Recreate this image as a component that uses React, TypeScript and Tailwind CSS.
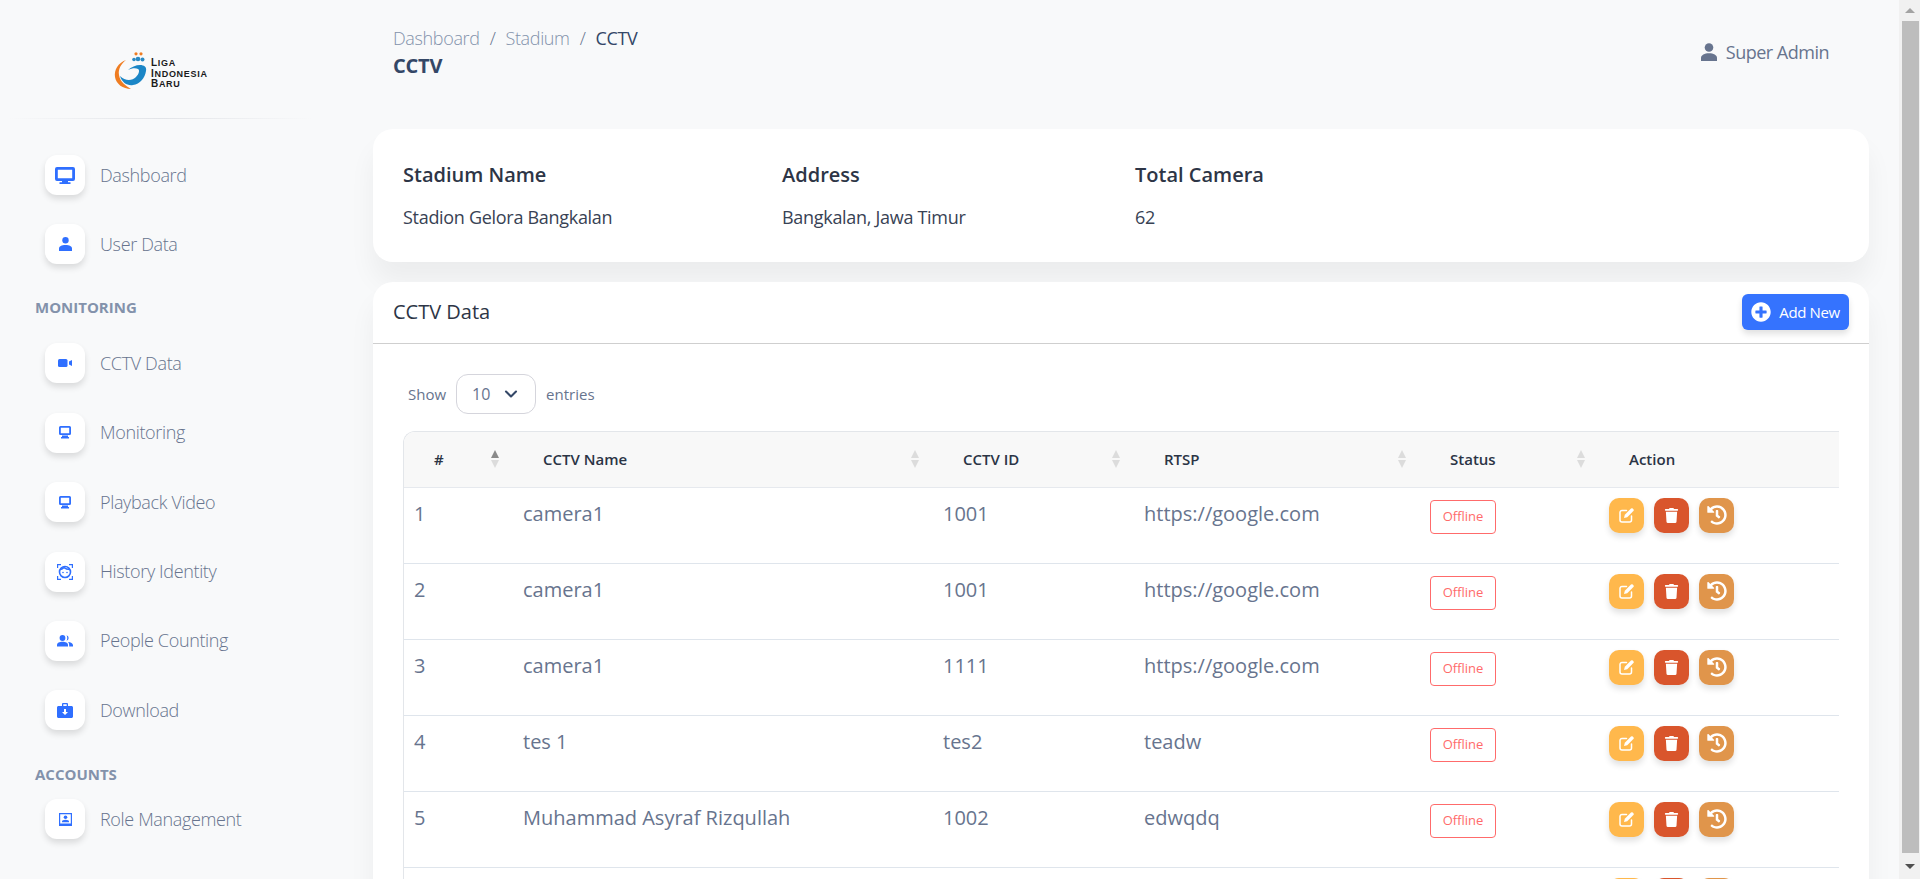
import type { ReactNode } from 'react';
import { ChevronDown } from 'lucide-react';
import { FaHistory, FaPlusCircle, FaTrash } from 'react-icons/fa';

const MonitorIcon = () => (
  <svg width="20" height="17" viewBox="0 0 20 17" fill="#2f6fff">
    <path fillRule="evenodd" d="M2 0h16a2 2 0 0 1 2 2v10a2 2 0 0 1-2 2h-5v1.200h2.500V17H4.500v-1.800H7V14H2a2 2 0 0 1-2-2V2a2 2 0 0 1 2-2Zm.8 2.800v8.400h14.400V2.800H2.800Z" />
  </svg>
);

const SmallMonitor = () => (
  <svg width="12" height="13" viewBox="0 0 12 13" fill="#2f6fff">
    <path fillRule="evenodd" d="M1.500 0h9A1.500 1.500 0 0 1 12 1.500v6A1.500 1.500 0 0 1 10.500 9h-9A1.500 1.500 0 0 1 0 7.500v-6A1.500 1.500 0 0 1 1.500 0Zm.3 1.800v5.400h8.400V1.800H1.800Z" />
    <path d="M3 9.500h6V11h1v1.500H2V11h1Z" />
  </svg>
);

const EditIcon = () => (
  <svg width="15" height="15" viewBox="0 0 15 15" fill="none">
    <path d="M7.500 2.500H3A2 2 0 0 0 1 4.500V12a2 2 0 0 0 2 2h7.500a2 2 0 0 0 2-2V8" stroke="white" strokeWidth="1.500" strokeLinecap="round" />
    <path d="M12 .6a1.300 1.300 0 0 1 1.800 0l.6.6a1.300 1.300 0 0 1 0 1.800L8.200 9.200 5 10l.8-3.200L12 .6Z" fill="white" />
  </svg>
);

const AdminIcon = () => (
  <svg width="16" height="18" viewBox="0 0 16 18" fill="#67748e">
    <circle cx="8" cy="4.500" r="4.300" />
    <path d="M0 18v-3.200C0 12 3.500 10.200 8 10.200s8 1.800 8 4.600V18Z" />
  </svg>
);

const icons: Record<string, ReactNode> = {
  dashboard: <MonitorIcon />,
  user: (
    <svg width="13" height="14" viewBox="0 0 13 14" fill="#2f6fff">
      <circle cx="6.500" cy="3.300" r="3.200" />
      <path d="M0 14v-2.500C0 9.300 2.500 8 6.500 8s6.500 1.300 6.500 3.500V14Z" />
    </svg>
  ),
  cctv: (
    <svg width="14" height="8" viewBox="0 0 14 8" fill="#2f6fff">
      <rect width="9.500" height="8" rx="1.500" />
      <path d="M11 2.500 14 1v6l-3-1.500Z" />
    </svg>
  ),
  monitor: <SmallMonitor />,
  face: (
    <svg width="16" height="16" viewBox="0 0 16 16" fill="none" stroke="#2f6fff" strokeWidth="1.200">
      <path d="M.6 4V.6H4M12 .6h3.400V4M.6 12v3.400H4M12 15.400h3.400V12" />
      <circle cx="8" cy="8" r="5.500" strokeWidth="1.600" />
      <circle cx="6" cy="8.500" r=".8" fill="#2f6fff" stroke="none" />
      <circle cx="10" cy="8.500" r=".8" fill="#2f6fff" stroke="none" />
      <path d="M3 5.500C5 5.500 6 4.500 7 3.500c1.500 1.500 3 2 6 2" strokeWidth="1.400" />
    </svg>
  ),
  people: (
    <svg width="16" height="12" viewBox="0 0 16 12" fill="#2f6fff">
      <circle cx="5.500" cy="3" r="2.900" />
      <path d="M0 11.500V10c0-2 2.500-3.200 5.500-3.200S11 8 11 10v1.500Z" />
      <path d="M9.500.2a2.900 2.900 0 0 1 0 5.600C10.500 4.500 10.500 1.500 9.500.2ZM11 7c2.800.3 5 1.400 5 3.200v1.300h-3.800V10c0-1.200-.4-2.200-1.200-3Z" />
    </svg>
  ),
  download: (
    <svg width="16" height="15" viewBox="0 0 16 15" fill="#2f6fff">
      <path fillRule="evenodd" d="M5 3V1.200C5 .5 5.500 0 6.200 0h3.600C10.500 0 11 .5 11 1.200V3h3.500c.8 0 1.500.7 1.500 1.500v9c0 .8-.7 1.500-1.500 1.500h-13C.7 15 0 14.300 0 13.500v-9C0 3.700.7 3 1.500 3H5Zm1.300-1.700V3h3.400V1.300H6.300ZM7 6v3H5l3 3 3-3H9V6H7Z" />
    </svg>
  ),
  role: (
    <svg width="13" height="13" viewBox="0 0 13 13" fill="#2f6fff">
      <path fillRule="evenodd" d="M0 0h13v13H0V0Zm1.200 1.200v9.200h10.600V1.200H1.200Z" />
      <circle cx="6.500" cy="4.300" r="1.800" />
      <path d="M3 9.200V8.500c0-1 1.500-1.700 3.500-1.700s3.500.7 3.500 1.700v.7Z" />
    </svg>
  ),
};

const NavItem = ({ icon, label }: { icon: string; label: string }) => (
  <div className="flex items-center h-10 pl-[45px]">
    <div className="w-10 h-10 rounded-xl bg-white shadow-[0_4px_6px_rgba(0,0,0,0.12)] flex items-center justify-center">
      {icons[icon]}
    </div>
    <span className="ml-[15px] text-[18px] font-light tracking-[-0.35px] text-[#67748e]">{label}</span>
  </div>
);

const SectionLabel = ({ children, className }: { children: ReactNode; className: string }) => (
  <div className={`pl-[35px] h-5 leading-5 text-[15px] font-bold text-[#8392ab] ${className}`}>{children}</div>
);

const Logo = () => (
  <div className="flex items-end h-[38px]">
    <svg width="36" height="38" viewBox="0 0 36 38" className="shrink-0">
      <path d="M12 8C4 11 0 18 1 25c1 7 8 12 16 12-5-3-11-7-12-14-1-6 2-11 7-15Z" fill="#ef7d22" />
      <path d="M6 24c2 7 8 10 13 9 7-1 12-7 13-14 1-4-2-6-6-6-4 0-9 2-12 5 4-2 8-2 10-1 2 1 1 5-2 8-4 4-11 4-16-1Z" fill="#1b86c6" />
      <circle cx="20" cy="7.500" r="1.800" fill="#2a8ac4" />
      <circle cx="24" cy="7" r="2.300" fill="#2a8ac4" />
      <circle cx="28.500" cy="7.500" r="2" fill="#2a8ac4" />
      <circle cx="22" cy="1.800" r="1.600" fill="#ef7d22" />
      <circle cx="27" cy="1.800" r="1.600" fill="#ef7d22" />
    </svg>
    <div className="ml-[1px] text-[9px] leading-[9.500px] font-['Liberation_Sans',sans-serif] font-bold tracking-[0.7px] text-[#1a1a1a]">
      <div><span className="text-[10px]">L</span>IGA</div>
      <div><span className="text-[10px]">I</span>NDONESIA</div>
      <div><span className="text-[10px]">B</span>ARU</div>
    </div>
  </div>
);

const Sidebar = () => (
  <aside className="w-[373px] shrink-0">
    <div className="h-[118px] flex items-center pl-[114px] pt-[23px]">
      <Logo />
    </div>
    <div className="ml-2 w-[305px] h-px bg-gradient-to-r from-transparent via-[#e2e4e8] to-transparent" />
    <nav className="pt-[36px]">
      <div className="flex flex-col gap-[29.400px]">
        <NavItem icon="dashboard" label="Dashboard" />
        <NavItem icon="user" label="User Data" />
      </div>
      <SectionLabel className="mt-[33px] mb-[26px]">MONITORING</SectionLabel>
      <div className="flex flex-col gap-[29.400px]">
        <NavItem icon="cctv" label="CCTV Data" />
        <NavItem icon="monitor" label="Monitoring" />
        <NavItem icon="monitor" label="Playback Video" />
        <NavItem icon="face" label="History Identity" />
        <NavItem icon="people" label="People Counting" />
        <NavItem icon="download" label="Download" />
      </div>
      <SectionLabel className="mt-[34px] mb-[15px]">ACCOUNTS</SectionLabel>
      <NavItem icon="role" label="Role Management" />
    </nav>
  </aside>
);

const SortArrows = ({ active }: { active?: boolean }) => (
  <span className="flex flex-col gap-[2px] shrink-0">
    <span className={`w-0 h-0 border-x-[4px] border-x-transparent border-b-[8px] ${active ? 'border-b-[#8a8a8a]' : 'border-b-[#dcdcdc]'}`} />
    <span className="w-0 h-0 border-x-[4px] border-x-transparent border-t-[8px] border-t-[#dcdcdc]" />
  </span>
);

const HeadCell = ({ label, active, noSort }: { label: string; active?: boolean; noSort?: boolean }) => (
  <th className="p-0 font-semibold text-left">
    <div className="flex items-center justify-between pl-[30px] pr-[14px] text-[15px] text-[#2b3445]">
      <span>{label}</span>
      {!noSort && <SortArrows active={active} />}
    </div>
  </th>
);

const ActionButton = ({ color, children }: { color: string; children: ReactNode }) => (
  <button className={`w-[35px] h-[35px] rounded-[10px] flex items-center justify-center text-white shadow-[0_4px_6px_rgba(0,0,0,0.12)] ${color}`}>
    {children}
  </button>
);

const rows = [
  ['1', 'camera1', '1001', 'https://google.com'],
  ['2', 'camera1', '1001', 'https://google.com'],
  ['3', 'camera1', '1111', 'https://google.com'],
  ['4', 'tes 1', 'tes2', 'teadw'],
  ['5', 'Muhammad Asyraf Rizqullah', '1002', 'edwqdq'],
];

const Actions = () => (
  <div className="flex gap-[10px]">
    <ActionButton color="bg-[#ffb84c]"><EditIcon /></ActionButton>
    <ActionButton color="bg-[#d9552c]"><FaTrash size={15} /></ActionButton>
    <ActionButton color="bg-[#e0954b]"><FaHistory size={20} /></ActionButton>
  </div>
);

const CctvTable = () => (
  <div className="mt-[17px] ml-[30px] mr-[30px] border-l border-t border-[#e3e6ea] rounded-tl-xl overflow-hidden">
    <table className="w-[1435px] table-fixed border-collapse">
      <colgroup>
        <col className="w-[109px]" />
        <col className="w-[420px]" />
        <col className="w-[201px]" />
        <col className="w-[286px]" />
        <col className="w-[179px]" />
        <col className="w-[240px]" />
      </colgroup>
      <thead>
        <tr className="h-[55px] bg-[#f8f8f8] border-b border-[#e6e9ee]">
          <HeadCell label="#" active />
          <HeadCell label="CCTV Name" />
          <HeadCell label="CCTV ID" />
          <HeadCell label="RTSP" />
          <HeadCell label="Status" />
          <HeadCell label="Action" noSort />
        </tr>
      </thead>
      <tbody>
        {rows.map((row) => (
          <tr key={row[0]} className="h-[76px] border-b border-[#dfe5ec] align-top text-[20px] text-[#67748e]">
            {row.map((cell, i) => (
              <td key={i} className="pl-[10px] pt-[11px] leading-[30px]">{cell}</td>
            ))}
            <td className="pl-[10px] pt-[12px]">
              <span className="flex items-center justify-center w-[66px] h-[34px] border border-[#ff6b6b] rounded-[4px] text-[13px] text-[#ff6b6b]">Offline</span>
            </td>
            <td className="pl-[10px] pt-[10px]"><Actions /></td>
          </tr>
        ))}
        {/* next row only shows the tops of its buttons at the fold */}
        <tr className="h-[76px] align-top">
          <td colSpan={5} />
          <td className="pl-[10px] pt-[10px]"><Actions /></td>
        </tr>
      </tbody>
    </table>
  </div>
);

const Scrollbar = () => (
  <div className="w-[21px] shrink-0 h-full bg-[#f1f1f1] flex flex-col items-center">
    <div className="h-[21px] flex items-center justify-center">
      <span className="w-0 h-0 border-x-[5px] border-x-transparent border-b-[5px] border-b-[#a3a3a3]" />
    </div>
    <div className="ml-[1px] w-[17px] flex-1 bg-[#bdbdbd]" />
    <div className="h-[26px] flex items-center justify-center">
      <span className="w-0 h-0 border-x-[5px] border-x-transparent border-t-[5px] border-t-[#505050]" />
    </div>
  </div>
);

export default function App() {
  return (
    <div className="flex h-screen overflow-hidden bg-[#f8f9fa] font-['Open_Sans',sans-serif]">
      <Sidebar />
      <main className="flex-1 min-w-0 pr-[30px]">
        {/* Top bar */}
        <header className="h-[129px] flex justify-between pl-5 pr-[40px]">
          <div className="pt-[26px]">
            <div className="flex items-center h-6 text-[18px] font-light tracking-[-0.35px] text-[#8392ab]">
              <span>Dashboard</span>
              <span className="mx-[10px] text-[#67748e]">/</span>
              <span>Stadium</span>
              <span className="mx-[10px] text-[#67748e]">/</span>
              <span className="font-normal text-[#344767]">CCTV</span>
            </div>
            <h1 className="mt-1 text-[20px] leading-6 font-bold tracking-[-0.2px] text-[#344767]">CCTV</h1>
          </div>
          <div className="flex items-center h-6 mt-[40px] text-[18px] font-medium tracking-[-0.5px] text-[#67748e]">
            <AdminIcon />
            <span className="ml-[9px]">Super Admin</span>
          </div>
        </header>

        {/* Stadium info */}
        <section className="h-[133px] bg-white rounded-[20px] shadow-[0_20px_27px_rgba(0,0,0,0.05)] pt-[32px] pl-[30px] grid grid-cols-[379px_353px_1fr]">
          {[
            ['Stadium Name', 'Stadion Gelora Bangkalan'],
            ['Address', 'Bangkalan, Jawa Timur'],
            ['Total Camera', '62'],
          ].map(([label, value]) => (
            <div key={label}>
              <div className="text-[20px] leading-7 font-semibold text-[#2d3546]">{label}</div>
              <div className="mt-4 text-[18px] leading-6 tracking-[-0.3px] text-[#384254]">{value}</div>
            </div>
          ))}
        </section>

        {/* CCTV data */}
        <section className="mt-5 bg-white rounded-t-[20px] shadow-[0_20px_27px_rgba(0,0,0,0.05)] pb-10">
          <div className="h-[62px] border-b border-[#cfcfcf] flex items-start justify-between pl-5 pr-5">
            <h2 className="mt-4 text-[20px] leading-7 text-[#2d3546]">CCTV Data</h2>
            <button className="mt-3 w-[107px] h-9 rounded-md bg-[#3573fe] text-white text-[15px] flex items-center justify-center shadow-[0_4px_6px_rgba(0,0,0,0.12)]">
              <FaPlusCircle size={20} />
              <span className="ml-2 tracking-[-0.4px]">Add New</span>
            </button>
          </div>
          <div className="flex items-center pl-[35px] mt-[30px] text-[15px] text-[#67748e]">
            <span>Show</span>
            <div className="ml-[10px] w-20 h-10 border border-[#d5d5dc] rounded-xl flex items-center pl-[15px] text-[16px]">
              <span>10</span>
              <ChevronDown size={20} strokeWidth={2.500} className="ml-[11px] text-[#344767]" />
            </div>
            <span className="ml-[10px]">entries</span>
          </div>
          <CctvTable />
        </section>
      </main>
      <Scrollbar />
    </div>
  );
}
